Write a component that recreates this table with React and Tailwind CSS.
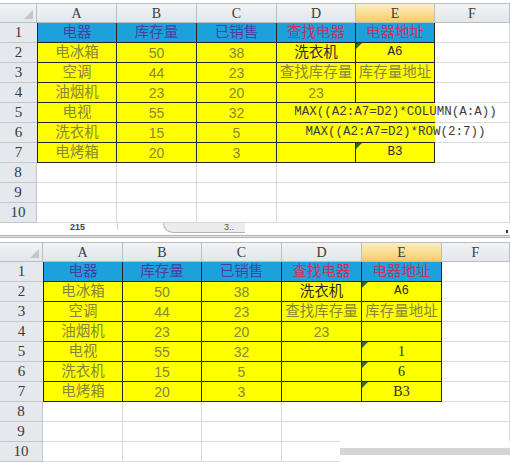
const CJK = "font-['Liberation_Sans','Noto_Sans_CJK_SC',sans-serif]";
const MONO = "font-['Liberation_Mono','Noto_Sans_CJK_SC',monospace]";
const SERIF = "font-['Liberation_Serif','Noto_Sans_CJK_SC',serif]";

const COLS = ["A", "B", "C", "D", "E", "F"];

// cell kinds: b = blue header (blue text), r = blue header (red text), y = yellow, e = empty
const hdrRow = [
  { t: "电器", k: "b" },
  { t: "库存量", k: "b" },
  { t: "已销售", k: "b" },
  { t: "查找电器", k: "r" },
  { t: "电器地址", k: "r" },
  { k: "e" },
];

const base = [
  ["电冰箱", "50", "38"],
  ["空调", "44", "23"],
  ["油烟机", "23", "20"],
  ["电视", "55", "32"],
  ["洗衣机", "15", "5"],
  ["电烤箱", "20", "3"],
];

const y = (t, extra = {}) => ({ t, k: "y", ...extra });
const empty = (extra = {}) => ({ k: "e", ...extra });

function buildRows(de) {
  const rows = [hdrRow];
  base.forEach((r, i) => {
    rows.push([y(r[0]), y(r[1], { num: true }), y(r[2], { num: true }), ...de[i], empty()]);
  });
  for (let i = 0; i < 3; i++) {
    rows.push([empty(), empty(), empty(), empty({ noR: true }), empty({ noR: true }), empty()]);
  }
  return rows;
}

const topRows = buildRows([
  [y("洗衣机", { dark: true }), y("A6", { mono: true, tri: true, dark: true })],
  [y("查找库存量"), y("库存量地址")],
  [y("23", { num: true }), y("")],
  [y("", { noR: true }), y("MAX((A2:A7=D2)*COLUMN(A:A))", { mono: true, noR: true, formula: true })],
  [y("", { noR: true }), y("MAX((A2:A7=D2)*ROW(2:7))", { mono: true, noR: true, formula: true })],
  [y(""), y("B3", { mono: true, tri: true, dark: true })],
]);

const bottomRows = buildRows([
  [y("洗衣机", { dark: true }), y("A6", { mono: true, tri: true, dark: true })],
  [y("查找库存量"), y("库存量地址")],
  [y("23", { num: true }), y("")],
  [y(""), y("1", { serif: true, tri: true, dark: true })],
  [y(""), y("6", { serif: true, tri: true, dark: true })],
  [y(""), y("B3", { serif: true, tri: true, dark: true })],
]);

function Cell({ c, first }) {
  let cls = "relative flex items-center justify-center border-b ";
  if (c.k === "e") {
    cls += "border-[#d9d9d9] bg-white ";
    cls += c.noR ? "" : "border-r ";
  } else {
    cls += "border-[#262626] ";
    cls += c.noR ? "" : "border-r ";
    if (first) cls += "border-l ";
    if (c.k === "b") cls += "bg-[#1ca1dd] text-[#4c3f9c] ";
    if (c.k === "r") cls += "bg-[#1ca1dd] text-[#c4345e] ";
    if (c.k === "y") cls += "bg-[#ffff00] ";
  }
  let tcls = "whitespace-nowrap leading-none ";
  if (c.mono) tcls += `${MONO} text-[12.5px] `;
  else if (c.serif) tcls += `${SERIF} text-[14px] `;
  else if (c.num) tcls += "font-['Liberation_Sans',sans-serif] text-[14px] ";
  else tcls += `${CJK} text-[14.5px] `;
  if (c.k === "y") tcls += c.dark ? "text-[#2b2b2b] " : c.formula ? "text-[#3c3c3c] " : "text-[#86863a] ";
  if (c.formula) tcls += "relative z-10 ";
  return (
    <div className={cls}>
      {c.tri && (
        <div className="absolute left-0 top-0 h-0 w-0 border-t-[6px] border-r-[6px] border-t-[#2f6a2a] border-r-transparent" />
      )}
      {c.t && <span className={tcls}>{c.t}</span>}
    </div>
  );
}

function Sheet({ cols, rows }) {
  return (
    <div className={`grid ${cols} auto-rows-[20px] bg-white`}>
      <div className="flex items-end justify-end border-t border-r border-b border-[#b9bdc4] bg-gradient-to-b from-[#f1f3f6] to-[#e3e6ea] p-[3px]">
        <div className="h-0 w-0 border-b-[9px] border-l-[9px] border-b-[#c2c6cc] border-l-transparent" />
      </div>
      {COLS.map((l) => (
        <div
          key={l}
          className={`flex items-center justify-center border-t border-r border-b border-[#b9bdc4] ${SERIF} text-[14px] text-[#3a3a3a] ${
            l === "E" ? "bg-gradient-to-b from-[#fcefc2] to-[#f5cd64]" : "bg-gradient-to-b from-[#f1f3f6] to-[#e3e6ea]"
          }`}
        >
          {l}
        </div>
      ))}
      {rows.map((row, i) => (
        <Row key={i} n={i + 1} row={row} />
      ))}
    </div>
  );
}

function Row({ n, row }) {
  const data = n <= 7;
  return (
    <>
      <div
        className={`flex items-center justify-center border-b border-[#c3c7cd] bg-[#e5e8ec] ${SERIF} text-[15px] text-[#3a3a3a] ${
          data ? "" : "border-r"
        }`}
      >
        {n}
      </div>
      {row.map((c, j) => (
        <Cell key={j} c={c} first={j === 0} />
      ))}
    </>
  );
}

function TabStrip() {
  return (
    <div className="flex h-[12px] items-start overflow-hidden bg-white pl-[70px]">
      <span className="font-['Liberation_Sans',sans-serif] text-[9px] font-bold leading-[9px] text-[#444]">215</span>
      <div className="ml-[32px] h-[7px] w-px bg-[#d0d0d0]" />
      <div className="ml-[45px] flex h-[10px] w-[82px] items-start rounded-bl-[16px] border-b border-l border-[#b5b5b5] bg-[#ececee] pl-[60px]">
        <span className="font-['Liberation_Sans',sans-serif] text-[9px] leading-[9px] text-[#555]">3..</span>
      </div>
      <div className="ml-auto mr-[2px] mt-[7px] h-[3px] w-[2px] bg-[#333]" />
    </div>
  );
}

export default function App() {
  return (
    <div className="relative flex h-[465px] w-[510px] flex-col overflow-hidden bg-white pt-[3px]">
      <Sheet cols="grid-cols-[37px_80px_80px_80px_79px_79px_1fr]" rows={topRows} />
      <TabStrip />
      <div className="h-[3px] border-t border-b border-[#b3b3b3] bg-[#e4e4e4]" />
      <div className="h-[4px] bg-white" />
      <Sheet cols="grid-cols-[43px_80px_79px_80px_80px_80px_1fr]" rows={bottomRows} />

      {/* horizontal scroll bar lying over the grid */}
      <div className="absolute left-[340px] top-[441px] h-[24px] w-[170px] bg-white">
        <div className="mt-[7px] h-[7px] bg-[#d5d5d5]" />
      </div>
    </div>
  );
}
